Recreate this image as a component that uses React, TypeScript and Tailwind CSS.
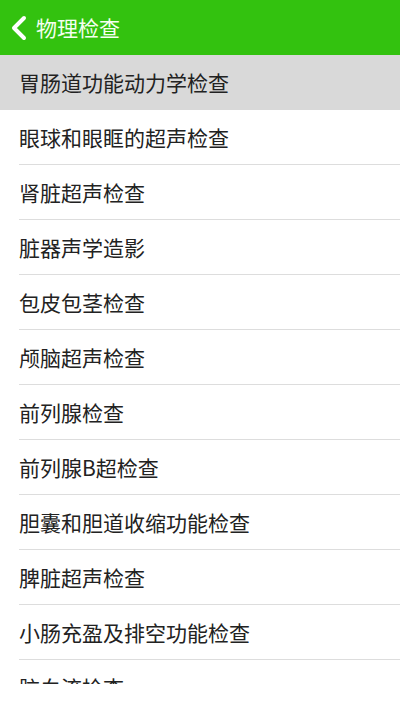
const items = [
  "胃肠道功能动力学检查",
  "眼球和眼眶的超声检查",
  "肾脏超声检查",
  "脏器声学造影",
  "包皮包茎检查",
  "颅脑超声检查",
  "前列腺检查",
  "前列腺B超检查",
  "胆囊和胆道收缩功能检查",
  "脾脏超声检查",
  "小肠充盈及排空功能检查",
  "脑血流检查",
];

export default function App() {
  return (
    <div
      className="flex h-[710px] w-[400px] flex-col bg-white"
      style={{ fontFamily: '"Noto Sans CJK SC", "Noto Sans", sans-serif' }}
    >
      <header className="flex h-[55px] shrink-0 items-center bg-[#33c20f] pl-[10px]">
        <svg width="18" height="26" viewBox="0 0 18 26" className="mr-[8px]">
          <path d="M14 3 L4 13 L14 23" fill="none" stroke="#ffffff" strokeWidth="4" strokeLinecap="round" strokeLinejoin="round" />
        </svg>
        <span className="text-[21px] leading-none text-[#f4fff0]">物理检查</span>
      </header>
      <ul className="h-[629px] overflow-hidden">
        {items.map((item, i) => (
          <li key={item} className={`h-[55px] ${i === 0 ? "bg-[#d9d9d9]" : "bg-white"}`}>
            <div
              className={`ml-[19px] flex h-full items-center ${i === 0 ? "" : "border-b border-[#dddddd]"}`}
            >
              <span className="text-[21px] leading-none text-[#222222]">{item}</span>
            </div>
          </li>
        ))}
      </ul>
    </div>
  );
}
